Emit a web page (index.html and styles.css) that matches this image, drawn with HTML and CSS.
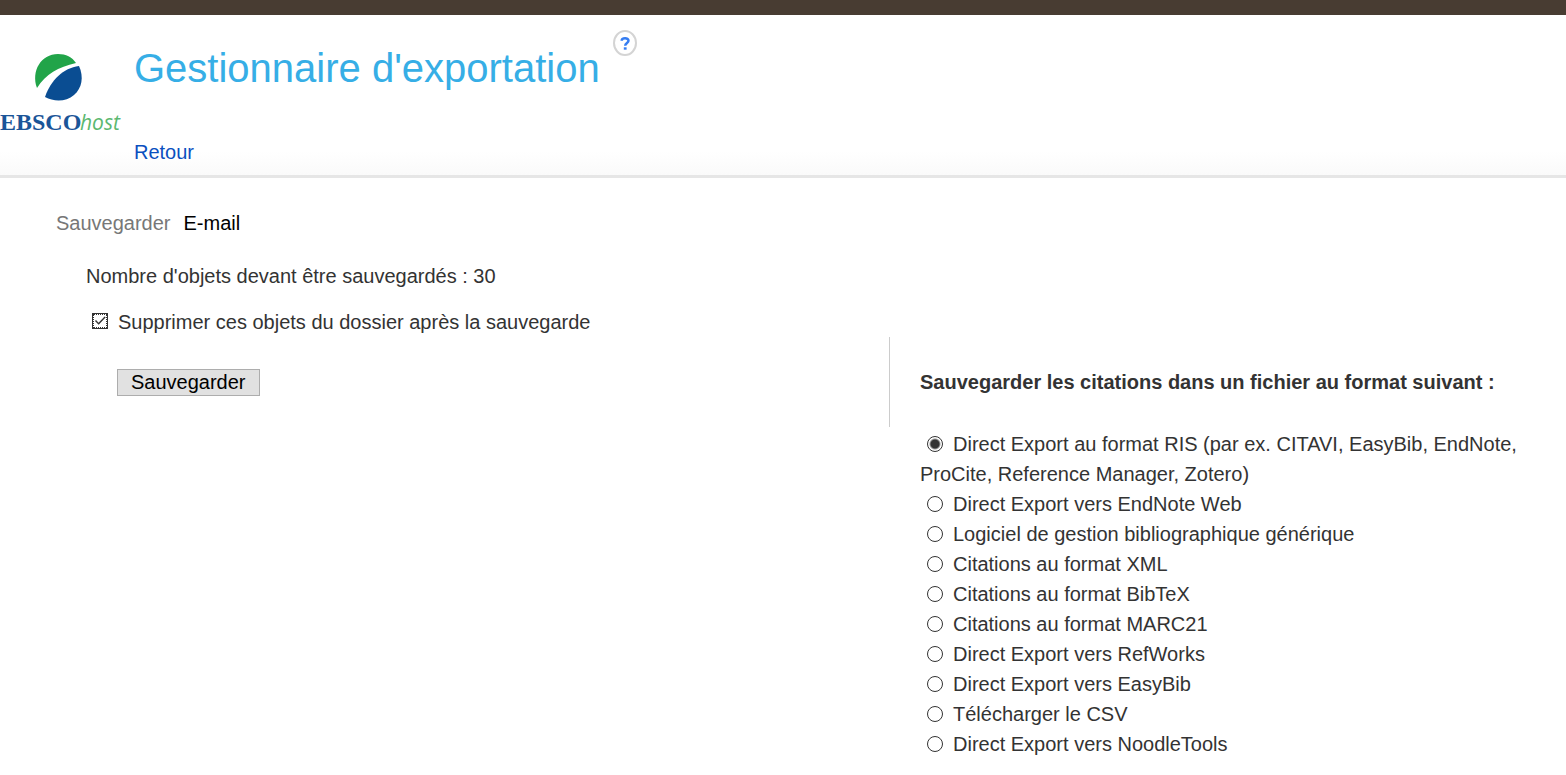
FILE: index.html
```html
<!DOCTYPE html>
<html lang="fr">
<head>
<meta charset="utf-8">
<title>Gestionnaire d'exportation</title>
<link rel="stylesheet" href="styles.css">
</head>
<body>
<div class="topbar"></div>
<header class="header">
  <svg class="logo" width="124" height="90" viewBox="0 0 124 90" role="img" aria-label="EBSCOhost">
    <path fill="#21a449" d="M37 39C31 22 41 5 58 5C66 5 72 8 76 14C58 18 46 25 37 39Z"/>
    <path fill="#0a4d92" d="M79 17C84 28 82 39 74 46C66 53 54 53 45 48C51 31 63 19 79 17Z"/>
    <text class="logo-name" x="0" y="81">EBSCO</text>
    <text class="logo-host" x="80" y="81">host</text>
  </svg>
  <div class="heading">
    <div class="title-row">
      <h1 class="title">Gestionnaire d'exportation</h1>
      <a class="help" href="#aide" aria-label="Aide">
        <svg width="24" height="26" viewBox="0 0 24 26">
          <ellipse cx="12" cy="13" rx="11" ry="12" fill="#fff" stroke="#d4d4d4" stroke-width="2"/>
          <path d="M8.7 10.7C8.7 7.5 15.5 7.3 15.5 10.8C15.5 13 12.2 13 12.2 15.8" fill="none" stroke="#357df2" stroke-width="2.5"/>
          <path d="M10.8 17.3h2.8v2.4h-2.8z" fill="#357df2"/>
        </svg>
      </a>
    </div>
    <a class="back" href="#retour">Retour</a>
  </div>
</header>
<main class="main">
  <nav class="tabs">
    <span class="tab-current">Sauvegarder</span>
    <a class="tab-link" href="#email">E-mail</a>
  </nav>
  <form class="form">
    <section class="save">
      <p class="count">Nombre d'objets devant être sauvegardés : 30</p>
      <div class="remove">
        <input class="check" type="checkbox" id="remove" checked>
        <label for="remove">Supprimer ces objets du dossier après la sauvegarde</label>
      </div>
      <button class="submit" type="button">Sauvegarder</button>
    </section>
    <fieldset class="formats">
      <legend class="formats-title">Sauvegarder les citations dans un fichier au format suivant :</legend>
      <ul class="list">
        <li><input class="radio" type="radio" name="format" id="f1" checked><label for="f1">Direct Export au format RIS (par ex. CITAVI, EasyBib, EndNote, ProCite, Reference Manager, Zotero)</label></li>
        <li><input class="radio" type="radio" name="format" id="f2"><label for="f2">Direct Export vers EndNote Web</label></li>
        <li><input class="radio" type="radio" name="format" id="f3"><label for="f3">Logiciel de gestion bibliographique générique</label></li>
        <li><input class="radio" type="radio" name="format" id="f4"><label for="f4">Citations au format XML</label></li>
        <li><input class="radio" type="radio" name="format" id="f5"><label for="f5">Citations au format BibTeX</label></li>
        <li><input class="radio" type="radio" name="format" id="f6"><label for="f6">Citations au format MARC21</label></li>
        <li><input class="radio" type="radio" name="format" id="f7"><label for="f7">Direct Export vers RefWorks</label></li>
        <li><input class="radio" type="radio" name="format" id="f8"><label for="f8">Direct Export vers EasyBib</label></li>
        <li><input class="radio" type="radio" name="format" id="f9"><label for="f9">Télécharger le CSV</label></li>
        <li><input class="radio" type="radio" name="format" id="f10"><label for="f10">Direct Export vers NoodleTools</label></li>
      </ul>
    </fieldset>
  </form>
</main>
</body>
</html>
```
FILE: styles.css
```css
* { box-sizing: border-box; }
body {
  margin: 0;
  background: #fff;
  color: #333;
  font: 20px/30px "Liberation Sans", Arial, sans-serif;
}
a { text-decoration: none; }
.topbar { height: 15px; background: #483c32; }
.header {
  display: flex;
  gap: 10px;
  padding: 15px 0 8px;
  border-bottom: 3px solid #e6e6e6;
  background: linear-gradient(#fff 85%, #fafafa);
}
.logo { flex: none; margin-top: 19px; }
.logo-name { font: bold 24px "Liberation Serif", serif; fill: #1b5598; }
.logo-host { font: italic 21px "Open Sans", sans-serif; fill: #5bb870; }
.title-row { display: flex; gap: 13px; }
.title {
  margin: 14px 0 31px;
  color: #36aee6;
  font-size: 40px;
  font-weight: normal;
  line-height: 48px;
}
.help { height: 26px; line-height: 0; }
.help svg { display: block; }
.back { display: block; width: max-content; margin-top: 14px; color: #0a50bf; }
.main { padding: 30px 24px 16px 56px; }
.tabs { display: flex; gap: 13px; }
.tab-current { color: #777; }
.tab-link { color: #000; }
.form { display: grid; grid-template-columns: 833fr 653fr; padding-top: 23px; }
.save { padding-left: 30px; }
.count { margin: 0 0 16px; }
.remove { display: flex; align-items: center; gap: 10px; padding-left: 6px; }
.check {
  appearance: none;
  width: 16px;
  height: 16px;
  margin: 0 0 2px;
  border: 1px solid #333;
  background: #fff;
  display: grid;
  place-items: center;
}
.check::before {
  content: "";
  grid-area: 1 / 1;
  width: 12px;
  height: 12px;
  border: 1px dotted #333;
}
.check:checked::after {
  content: "";
  grid-area: 1 / 1;
  width: 12px;
  height: 10px;
  background: #333;
  clip-path: polygon(8% 50%, 17% 40%, 38% 68%, 88% 5%, 98% 13%, 39% 88%);
}
.submit {
  display: block;
  margin: 32px 0 0 31px;
  padding: 0 13px;
  border: 1px solid #adadad;
  background: #e1e1e1;
  color: #000;
  font: inherit;
  line-height: 25px;
}
.formats {
  min-width: 0;
  margin: 76px 0 0;
  padding: 0 0 0 31px;
  border: 0;
  background: linear-gradient(#ccc, #ccc) left top / 1px 90px no-repeat;
}
.formats-title { float: left; width: 100%; padding: 30px 0; font-weight: bold; }
.list { clear: both; margin: 0; padding: 2px 0 0; list-style: none; }
.radio {
  appearance: none;
  width: 16px;
  height: 16px;
  margin: 0 10px 0 7px;
  border: 1px solid #333;
  border-radius: 50%;
  background: #fff;
  vertical-align: -1px;
}
.radio:checked { background: radial-gradient(circle, #333 4px, #fff 6px); }
```
